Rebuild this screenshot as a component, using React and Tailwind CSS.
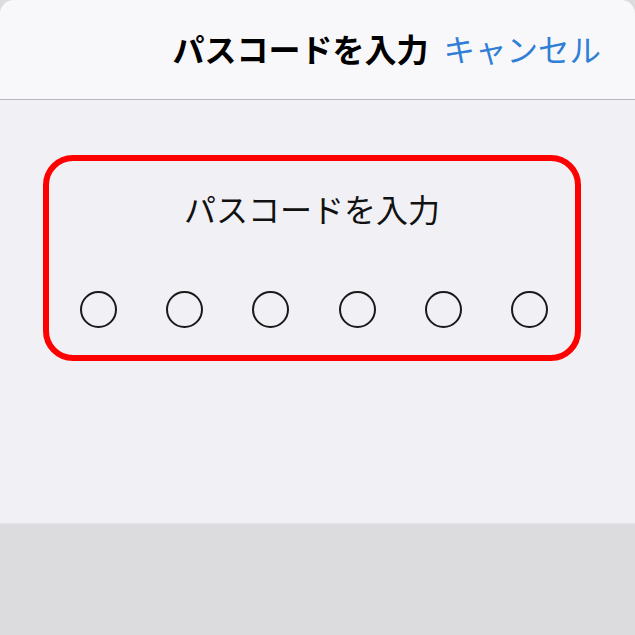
export default function App() {
  const font = { fontFamily: '"Noto Sans CJK JP", "Noto Sans", sans-serif' };
  return (
    <div className="w-[635px] h-[635px] overflow-hidden flex flex-col bg-[#dcdcdf]" style={font}>
      <div className="h-[100px] shrink-0 bg-[#f8f8fa] border-b border-[#b9b9bd] flex items-start justify-end pr-[34px] pt-[29px] gap-[15px] rounded-tl-[14px] rounded-tr-[14px]">
        <span className="text-[32px] leading-[38px] font-bold text-black">パスコードを入力</span>
        <span className="text-[31.5px] leading-[38px] text-[#2f7fd6]">キャンセル</span>
      </div>
      <div className="h-[424px] shrink-0 bg-[#f0f0f5] border-b border-[#e4e4ea] pt-[55px] pl-[43px] pr-[54px]">
        <div className="h-[206px] rounded-[30px] border-[6px] border-[#ff0000] flex flex-col items-center">
          <div className="mt-[28px] text-[32px] leading-[38px] text-[#111]">パスコードを入力</div>
          <div className="mt-[64px] w-full flex justify-between pl-[31px] pr-[27px]">
            {[0, 1, 2, 3, 4, 5].map((i) => (
              <div key={i} className="w-[37px] h-[37px] rounded-full border-2 border-[#1a1a1a]" />
            ))}
          </div>
        </div>
      </div>
      <div className="flex-1 bg-[#dcdcdf]" />
    </div>
  );
}
